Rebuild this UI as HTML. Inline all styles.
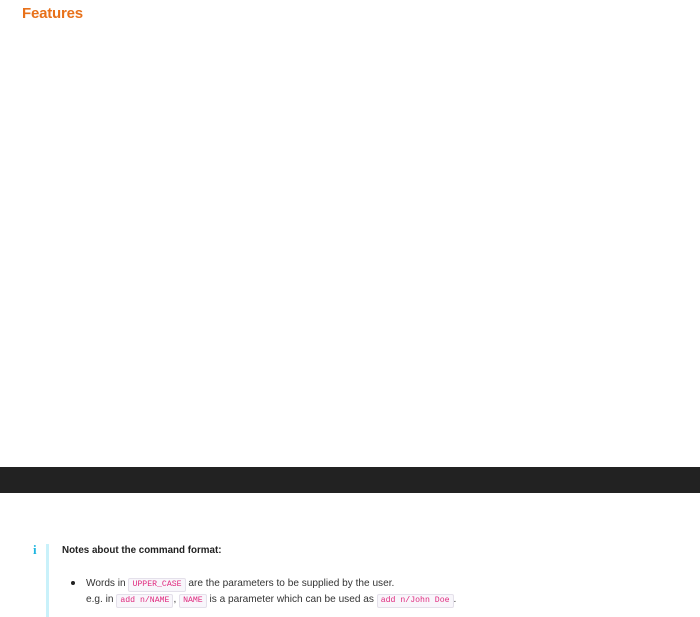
<!DOCTYPE html>
<html><head><meta charset="utf-8"><style>
html,body{margin:0;padding:0;width:700px;height:617px;overflow:hidden;background:#fff;font-family:"Liberation Sans",sans-serif;}
.h{position:absolute;left:22px;top:5px;font-size:15px;color:#e8711a;font-weight:bold;letter-spacing:-0.2px;}
.band{position:absolute;left:0;top:467px;width:700px;height:26px;background:#222;}
.icon{position:absolute;left:33px;top:542px;font-size:13px;font-weight:bold;color:#1fb6e0;font-family:"Liberation Serif",serif;}
.bar{position:absolute;left:46px;top:544px;width:3px;height:73px;background:#c9f1fa;}
.t{position:absolute;left:62px;top:545px;font-size:9.8px;font-weight:bold;color:#222;}
.b{position:absolute;left:86px;top:576px;font-size:10.1px;color:#333;line-height:15px;white-space:nowrap;}
.dot{position:absolute;left:71px;top:581px;width:4px;height:4px;border-radius:50%;background:#222;}
code{display:inline-block;line-height:12px;font-family:"Liberation Mono",monospace;font-size:8.2px;color:#e0297e;background:#f8f6fb;border:1px solid #e4e0ea;border-radius:2px;padding:0 3px;vertical-align:0px;}
</style></head><body>
<div class="h">Features</div>
<div class="band"></div>
<div class="icon">i</div>
<div class="bar"></div>
<div class="t">Notes about the command format:</div>
<div class="dot"></div>
<div class="b">Words in <code>UPPER_CASE</code> are the parameters to be supplied by the user.<br>e.g. in <code>add n/NAME</code>, <code>NAME</code> is a parameter which can be used as <code>add n/John Doe</code>.</div>
</body></html>
